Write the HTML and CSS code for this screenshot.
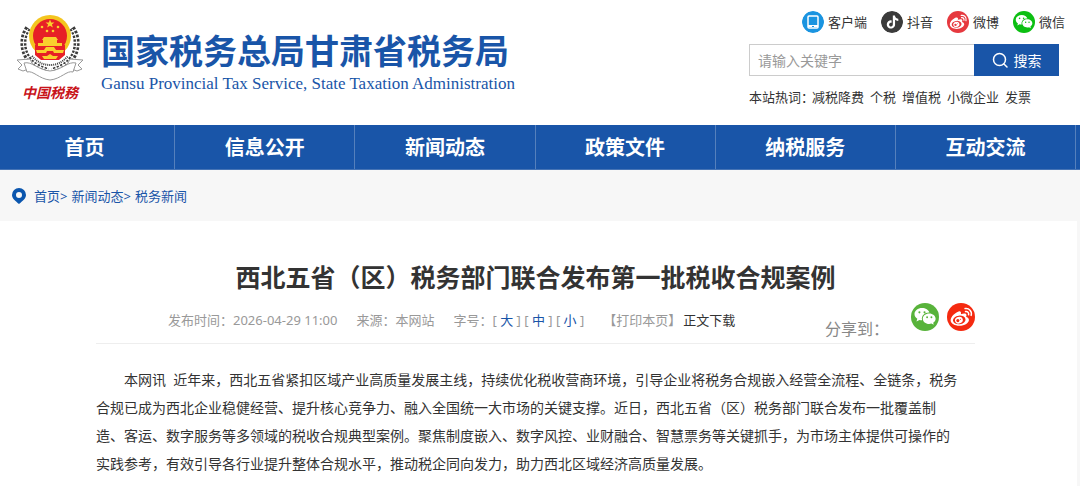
FILE: index.html
```html
<!DOCTYPE html>
<html lang="zh-CN">
<head>
  <meta charset="UTF-8" />
  <meta name="viewport" content="width=device-width, initial-scale=1.0" />
  <title>西北五省（区）税务部门联合发布第一批税收合规案例</title>
  <link rel="stylesheet" href="styles.css">
</head>
<body>
  <!-- shared icons -->
  <svg class="sprite" width="0" height="0" aria-hidden="true">
    <symbol id="wechat" viewBox="2 2 24 24">
      <path fill="#fff" d="M11.500 6.300c-3.600 0-6.500 2.300-6.500 5.200 0 1.700.9 3.100 2.400 4.100l-.7 2.200 2.500-1.300c.8.2 1.500.3 2.300.3-1-4 2.600-6.900 6.300-6.600-.7-2.300-3.300-3.900-6.300-3.900z"/>
      <path fill="#fff" d="M17.600 10.900c-3.100 0-5.500 2-5.500 4.500s2.400 4.500 5.500 4.500c.7 0 1.300-.1 1.900-.3l2 1.100-.5-1.800c1.300-.8 2.100-2.100 2.100-3.500 0-2.500-2.400-4.500-5.500-4.500z"/>
      <g class="cut"><circle cx="9.200" cy="10" r=".9"/><circle cx="13.600" cy="10" r=".9"/><circle cx="15.800" cy="14.200" r=".8"/><circle cx="19.500" cy="14.200" r=".8"/></g>
    </symbol>
    <symbol id="weibo" viewBox="2 2 24 24">
      <path fill="#fff" d="M12 9.200c-2.600.6-6.900 4.400-6.900 7.600 0 2.900 3.700 4.700 7.400 4.700 4.900 0 8.300-2.700 8.300-5 0-1.500-1.200-2.200-2.400-2.500.5-1.300.4-2.200-.3-2.700-.9-.7-2.500-.4-4.200.3.400-1.700-.2-2.700-1.900-2.400z"/>
      <ellipse class="cut" cx="12.500" cy="16.500" rx="5.400" ry="3.700" transform="rotate(-7 12.500 16.500)"/>
      <ellipse cx="12.200" cy="16.700" rx="3.400" ry="2.800" fill="#fff" transform="rotate(-20 12.200 16.700)"/>
      <circle class="cut" cx="11.300" cy="17.100" r="1.300"/>
      <circle class="cut" cx="13.500" cy="15.900" r=".5"/>
      <path fill="none" stroke="#fff" stroke-width="1.300" stroke-linecap="round" d="M17.500 6.800c3.400-.6 6.200 2.200 5.200 5.800M17.900 9.300c1.800-.3 3 1 2.600 2.800"/>
    </symbol>
  </svg>

  <header class="header">
    <a class="brand" href="#">
      <span class="emblem">
        <svg width="70" height="68" viewBox="0 0 70 68" aria-hidden="true">
          <!-- wheat ears -->
          <g fill="none" stroke="#3c3c3c">
            <path stroke-width="6" stroke-dasharray="2.500 1.500" d="M13 14C6 24 7 39 16 48c4 4 10 7 17 9"/>
            <path stroke-width="6" stroke-dasharray="2.500 1.500" d="M57 14c7 10 6 25-3 34-4 4-10 7-17 9"/>
            <path stroke-width="1" stroke="#fff" d="M13 15C6 25 7 38 16 47c4 4 10 7 17 9M57 15c7 10 6 23-3 32-4 4-10 7-17 9"/>
            <path stroke-width="2" stroke-dasharray="1 1" d="M17 42c6 7 12 9 18 9s12-2 18-9"/>
          </g>
          <circle cx="35" cy="22" r="21" fill="#f4c51f"/>
          <circle cx="35" cy="22" r="17" fill="#e71f26"/>
          <path fill="#e71f26" d="M20 31h30v10l-6 5H26l-6-5z"/>
          <path fill="#f9cf2d" d="M35 5.500l1.200 3h3.200l-2.500 2 1 3.100-2.900-1.900-2.900 1.900 1-3.100-2.500-2h3.200z"/>
          <g fill="#f9cf2d">
            <circle cx="27" cy="13" r="1.300"/><circle cx="43" cy="13" r="1.300"/>
            <circle cx="32" cy="17" r="1.300"/><circle cx="38" cy="17" r="1.300"/>
            <path d="M29 23h12l2 3h-1v3h5v3H23v-3h5v-3h-1z"/>
            <path d="M21 36h8l2-3h8l2 3h8l-1 3h-9l-1-2h-6l-1 2h-9z"/>
            <path d="M27 42h5l3-2 3 2h5l-2 3H29z"/>
          </g>
          <!-- ribbon -->
          <g fill="#fff" stroke="#999" stroke-width="1" stroke-linejoin="round">
            <path d="M2 46l13-1 4 8-11 4-5-2 4-4z"/>
            <path d="M68 46l-13-1-4 8 11 4 5-2-4-4z"/>
            <path d="M9 49c8-2 14 7 26 8 12-1 18-10 26-8l-3 9c-6-2-12 7-23 8-11-1-17-10-23-8z"/>
          </g>
        </svg>
        <span class="emblem-text">中国税務</span>
      </span>
      <span class="brand-names">
        <span class="brand-cn">国家税务总局甘肃省税务局</span>
        <span class="brand-en">Gansu Provincial Tax Service, State Taxation Administration</span>
      </span>
    </a>
    <div class="tools">
      <div class="social">
        <a href="#">
          <svg class="dot" width="22" height="22" viewBox="0 0 22 22" aria-hidden="true"><circle cx="11" cy="11" r="11" fill="#1a94e0"/><rect x="6" y="5" width="10" height="12" rx="1" fill="none" stroke="#fff" stroke-width="1.500"/><path stroke="#fff" stroke-width="2" d="M6 15h10"/><path stroke="#1a94e0" d="M10 15.500h2"/></svg>
          客户端
        </a>
        <a href="#">
          <svg class="dot" width="22" height="22" viewBox="-9 -8 40 40" aria-hidden="true"><circle cx="11" cy="12" r="20" fill="#3b3b3b"/><path fill="#fff" d="M12.525.02c1.310-.02 2.610-.01 3.910-.02.08 1.530.63 3.090 1.750 4.170 1.120 1.110 2.700 1.620 4.240 1.790v4.030c-1.440-.05-2.890-.35-4.200-.97-.57-.26-1.100-.59-1.620-.93-.01 2.920.01 5.840-.02 8.750-.08 1.400-.54 2.790-1.350 3.940-1.310 1.920-3.580 3.170-5.910 3.210-1.430.08-2.860-.31-4.080-1.030-2.020-1.190-3.440-3.370-3.650-5.710-.02-.5-.03-1-.01-1.490.18-1.900 1.120-3.720 2.580-4.960 1.660-1.440 3.980-2.130 6.150-1.720.02 1.480-.04 2.960-.04 4.440-.99-.32-2.150-.23-3.020.37-.63.41-1.110 1.040-1.360 1.750-.21.51-.15 1.070-.14 1.610.24 1.640 1.820 3.020 3.500 2.870 1.120-.01 2.190-.66 2.770-1.610.19-.33.4-.67.41-1.060.1-1.790.06-3.570.07-5.360.01-4.030-.01-8.050.02-12.070z"/></svg>
          抖音
        </a>
        <a href="#">
          <svg class="dot red" width="22" height="22" aria-hidden="true"><use href="#weibo"/></svg>
          微博
        </a>
        <a href="#">
          <svg class="dot green" width="22" height="22" aria-hidden="true"><use href="#wechat"/></svg>
          微信
        </a>
      </div>
      <form class="search" action="#">
        <input type="text" placeholder="请输入关键字" aria-label="请输入关键字">
        <button type="submit">
          <svg width="16" height="16" viewBox="0 0 16 16" fill="none" stroke="#fff" stroke-width="1.500" stroke-linecap="round" aria-hidden="true"><circle cx="7.500" cy="7.500" r="6"/><path d="M12 12l3 3"/></svg>
          搜索
        </button>
      </form>
      <div class="hot">
        <span>本站热词：</span><a href="#">减税降费</a><a href="#">个税</a><a href="#">增值税</a><a href="#">小微企业</a><a href="#">发票</a>
      </div>
    </div>
  </header>

  <nav class="nav">
    <a href="#">首页</a>
    <a href="#">信息公开</a>
    <a href="#">新闻动态</a>
    <a href="#">政策文件</a>
    <a href="#">纳税服务</a>
    <a href="#">互动交流</a>
  </nav>

  <div class="crumbs">
    <svg width="14" height="16" viewBox="0 0 14 16" aria-hidden="true"><path fill="#0b56ae" fill-rule="evenodd" d="M7 0a7 7 0 0 0-7 7c0 3.700 3.500 6 7 9 3.500-3 7-5.300 7-9a7 7 0 0 0-7-7zm0 4a3 3 0 1 1 0 6 3 3 0 0 1 0-6z"/></svg>
    <a href="#">首页&gt;</a>
    <a href="#">新闻动态&gt;</a>
    <a href="#">税务新闻</a>
  </div>

  <main class="article">
    <h1>西北五省（区）税务部门联合发布第一批税收合规案例</h1>
    <div class="meta">
      <span>发布时间：2026-04-29 11:00</span>
      <span>来源：本网站</span>
      <span class="sizes">字号：[ <button type="button">大</button> ] [ <button type="button">中</button> ] [ <button type="button">小</button> ]</span>
      <span class="actions"><a href="#">【打印本页】</a><a class="download" href="#">正文下载</a></span>
      <div class="share">
        <span class="share-label">分享到：</span>
        <a href="#" aria-label="微信"><svg class="dot leaf" width="28" height="28" aria-hidden="true"><use href="#wechat"/></svg></a>
        <a href="#" aria-label="微博"><svg class="dot flame" width="28" height="28" aria-hidden="true"><use href="#weibo"/></svg></a>
      </div>
    </div>
    <div class="content">
      <p>本网讯&nbsp; 近年来，西北五省紧扣区域产业高质量发展主线，持续优化税收营商环境，引导企业将税务合规嵌入经营全流程、全链条，税务合规已成为西北企业稳健经营、提升核心竞争力、融入全国统一大市场的关键支撑。近日，西北五省（区）税务部门联合发布一批覆盖制造、客运、数字服务等多领域的税收合规典型案例。聚焦制度嵌入、数字风控、业财融合、智慧票务等关键抓手，为市场主体提供可操作的实践参考，有效引导各行业提升整体合规水平，推动税企同向发力，助力西北区域经济高质量发展。</p>
    </div>
  </main>
</body>
</html>
```
FILE: styles.css
```css
* { box-sizing: border-box; }
body { margin: 0; background: #f7f7f7; color: #333; font-family: "Noto Sans", "Noto Sans CJK SC", sans-serif; font-size: 13px; line-height: 20px; }
a { color: inherit; text-decoration: none; }
button, input { font-family: inherit; }
.sprite { position: absolute; }

.header { display: flex; justify-content: space-between; background: #fff; padding: 11px 15px 18px; }
.brand { display: flex; gap: 16px; color: #1955a8; }
.emblem { display: flex; flex-direction: column; align-items: center; padding-top: 3px; }
.emblem-text { color: #c8141c; font-family: "Noto Sans CJK TC", sans-serif; font-size: 14px; font-weight: bold; font-style: italic; line-height: 20px; }
.brand-names { display: flex; flex-direction: column; padding-top: 19px; white-space: nowrap; }
.brand-cn { font-size: 34px; font-weight: bold; line-height: 42px; }
.brand-en { font-family: "Liberation Serif", serif; font-size: 17px; line-height: 24px; }

.tools { width: 316px; }
.social { display: flex; justify-content: flex-end; gap: 14px; }
.social a { display: flex; align-items: center; gap: 4px; line-height: 22px; }
.dot { display: block; border-radius: 50%; }
.red { background: #e6393f; fill: #e6393f; }
.green { background: #0cbf12; fill: #0cbf12; }
.leaf { background: #58b33b; fill: #58b33b; }
.flame { background: #f52a10; fill: #f52a10; }
.search { display: flex; margin: 11px 6px 11px 0; }
.search input { flex: 1; min-width: 0; height: 32px; padding: 0 8px; border: 1px solid #ccc; border-right: 0; border-radius: 0; background: #fff; font-size: 14px; }
.search input::placeholder { color: #999; }
.search button { display: flex; align-items: center; justify-content: center; gap: 6px; width: 85px; border: 0; padding: 0; background: #1955a8; color: #fff; font-size: 14px; }
.hot { display: flex; gap: 6px; white-space: nowrap; }
.hot span { margin-right: -8px; }

.nav { display: grid; grid-template-columns: repeat(6, 1fr); margin-left: -5px; padding-right: 4px; background: #1955a8; border-bottom: 1px solid #4674b5; }
.nav a { height: 44px; border-right: 1px solid #5580bc; color: #fff; font-size: 20px; font-weight: bold; line-height: 46px; text-align: center; }

.crumbs { display: flex; align-items: center; gap: 4px; padding: 16px 12px 15px; color: #1955a8; }
.crumbs svg { margin-right: 4px; }

.article { margin-right: 3px; padding: 37px 102px 20px 96px; background: #fff; }
.article h1 { margin: 0; font-size: 25px; line-height: 38px; text-align: center; }
.meta { display: flex; align-items: center; gap: 19px; height: 48px; padding-left: 72px; border-bottom: 1px solid #eee; color: #999; white-space: nowrap; }
.meta button { border: 0; padding: 0; background: none; color: #1955a8; font-size: 13px; }
.actions { display: flex; gap: 2px; }
.download { color: #333; }
.share { display: flex; align-items: flex-start; align-self: flex-start; gap: 8px; margin-left: auto; padding-top: 7px; color: #888; font-size: 16px; }
.share-label { margin-right: 14px; padding-top: 16px; }
.content { padding: 22px 12px 0 0; }
.content p { margin: 0; font-size: 14px; line-height: 28px; text-indent: 2em; }
```
